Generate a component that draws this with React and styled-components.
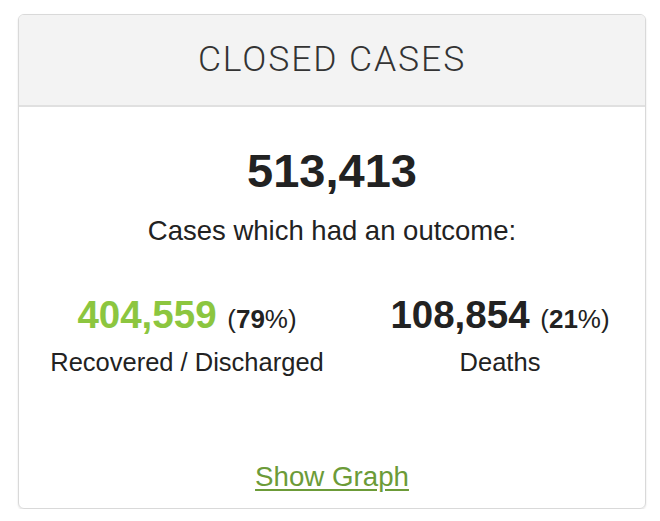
import React from "react";
import styled, { createGlobalStyle } from "styled-components";

const GlobalStyle = createGlobalStyle`
  body {
    margin: 0;
    background: #ffffff;
    font-family: "Liberation Sans", Arial, sans-serif;
    color: #222;
  }
`;

const Page = styled.div`
  padding: 14px 14px 0 18px;
`;

const Card = styled.div`
  width: 628px;
  height: 495px;
  box-sizing: border-box;
  border: 1px solid #d9d9d9;
  border-radius: 6px;
  box-shadow: 0 1px 2px rgba(0, 0, 0, 0.12);
  overflow: hidden;
  display: flex;
  flex-direction: column;
`;

const Header = styled.div`
  height: 92px;
  box-sizing: border-box;
  background: #f3f3f3;
  border-bottom: 2px solid #e0e0e0;
  display: flex;
  align-items: center;
  justify-content: center;
`;

const Title = styled.h3`
  margin: 0;
  font-family: Roboto, "Liberation Sans", sans-serif;
  font-weight: 300;
  font-size: 35.5px;
  letter-spacing: 1.9px;
  line-height: 1;
  color: #333;
`;

const Body = styled.div`
  flex: 1;
  display: flex;
  flex-direction: column;
  align-items: center;
  padding-top: 40px;
`;

const Total = styled.div`
  font-size: 47px;
  font-weight: bold;
  line-height: 1;
  color: #222;
`;

const Caption = styled.div`
  margin-top: 23px;
  font-size: 27.5px;
  line-height: 1;
`;

const Stats = styled.div`
  margin-top: 51px;
  width: 100%;
  display: grid;
  grid-template-columns: 336px 1fr;
`;

const Stat = styled.div`
  display: flex;
  flex-direction: column;
  align-items: center;
`;

const Figure = styled.div`
  font-size: 38.5px;
  font-weight: bold;
  line-height: 1;
  white-space: nowrap;
  color: ${(p) => p.color || "#222"};
`;

const Share = styled.span`
  font-size: 26px;
  font-weight: normal;
  color: #222;
  strong {
    font-weight: bold;
  }
`;

const Label = styled.div`
  margin-top: 16px;
  font-size: 25.5px;
  line-height: 1;
`;

const GraphLink = styled.a`
  margin-top: 87px;
  font-size: 27.7px;
  line-height: 1;
  color: #6c9b38;
  text-decoration: underline;
  text-underline-offset: 3px;
  cursor: pointer;
`;

const stats = [
  { value: "404,559", pct: "79", label: "Recovered / Discharged", color: "#8cc63f" },
  { value: "108,854", pct: "21", label: "Deaths" },
];

export default function App() {
  return (
    <Page>
      <GlobalStyle />
      <Card>
        <Header>
          <Title>CLOSED CASES</Title>
        </Header>
        <Body>
          <Total>513,413</Total>
          <Caption>Cases which had an outcome:</Caption>
          <Stats>
            {stats.map((s) => (
              <Stat key={s.label}>
                <Figure color={s.color}>
                  {s.value}{" "}
                  <Share>
                    (<strong>{s.pct}</strong>%)
                  </Share>
                </Figure>
                <Label>{s.label}</Label>
              </Stat>
            ))}
          </Stats>
          <GraphLink>Show Graph</GraphLink>
        </Body>
      </Card>
    </Page>
  );
}
